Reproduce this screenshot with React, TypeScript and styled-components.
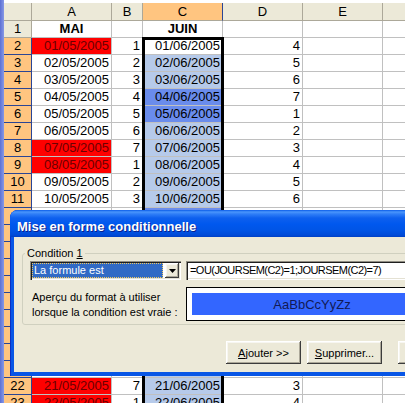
import styled, { createGlobalStyle } from 'styled-components';

const GlobalStyle = createGlobalStyle`
  body {
    margin: 0;
    background: #fff;
    font-family: "Liberation Sans", Arial, sans-serif;
  }
`;

const Page = styled.div`
  position: relative;
  width: 405px;
  height: 403px;
  overflow: hidden;
  display: flex;
  background: #fff;
`;

const WindowEdge = styled.div`
  flex: none;
  width: 4px;
  background: linear-gradient(90deg, #5d70d4, #8799e6);
`;

const Sheet = styled.div`
  flex: none;
  margin-top: 3px;
  display: grid;
  grid-template-columns: 28px 80px 31px 80px 80px 80px 80px;
  grid-template-rows: 18px;
  grid-auto-rows: 17px;
  font-size: 13px;
  color: #000;
`;

const HeaderCell = styled.div<{ $selected?: boolean }>`
  box-sizing: border-box;
  border-right: 1px solid ${p => (p.$selected ? '#2a4595' : '#aca899')};
  border-bottom: 1px solid ${p => (p.$selected ? '#2a4595' : '#aca899')};
  background: ${p => (p.$selected ? '#ffc580' : '#ece9d8')};
  text-align: center;
  line-height: 16px;
`;

const ColumnLetter = styled(HeaderCell)`
  line-height: 17px;
  border-bottom-color: #aca899;
`;

const Cell = styled.div<{ $bg?: string; $align?: string; $bold?: boolean; $ink?: string }>`
  box-sizing: border-box;
  border-right: 1px solid #c0c0c0;
  border-bottom: 1px solid #c0c0c0;
  background: ${p => p.$bg ?? '#fff'};
  color: ${p => p.$ink ?? '#000'};
  text-align: ${p => p.$align ?? 'right'};
  font-weight: ${p => (p.$bold ? 700 : 400)};
  padding: 0 2px;
  line-height: 16px;
  white-space: nowrap;
  overflow: hidden;
`;

const SelectionFrame = styled.div`
  position: absolute;
  left: 142px;
  top: 37px;
  width: 82px;
  height: 420px;
  box-sizing: border-box;
  border: 3px solid #000;
  pointer-events: none;
`;

/* dialog */

const Dialog = styled.div`
  position: absolute;
  left: 10px;
  top: 210px;
  width: 470px;
  height: 166px;
  display: flex;
  flex-direction: column;
  border-radius: 8px 8px 0 0;
  background: #0856e6;
  box-shadow: inset 1px 0 0 #0a2fc4;
  overflow: hidden;
`;

const TitleBar = styled.div`
  flex: none;
  box-sizing: border-box;
  height: 27px;
  padding: 6px 0 0 7px;
  display: flex;
  align-items: center;
  background: linear-gradient(
    180deg,
    #0a5ce8 0px,
    #4a96fc 2px,
    #2f7ef7 4px,
    #0e60ee 8px,
    #0058ee 14px,
    #0055e6 20px,
    #004bd8 25px,
    #0040c4 27px
  );
  color: #fff;
  font-size: 13px;
  font-weight: 700;
  text-shadow: 1px 1px 0 #0a1f8c;
`;

const DialogBody = styled.div`
  flex: 1;
  margin: 0 0 4px 4px;
  display: flex;
  flex-direction: column;
  background: #ece9d8;
  font-size: 11px;
  color: #000;
`;

const GroupBox = styled.fieldset`
  box-sizing: border-box;
  width: 440px;
  min-width: 0;
  margin: 10px 0 0 8px;
  padding: 0 0 3px 0;
  border: 1px solid #d0d0bf;
  border-radius: 3px;
`;

const GroupLegend = styled.legend`
  margin-left: 2px;
  padding: 0 2px;
  line-height: 13px;
  font-size: 11px;
`;

const GroupContent = styled.div`
  padding: 1px 0 0 7px;
  display: flex;
  flex-direction: column;
`;

const ConditionRow = styled.div`
  display: flex;
  gap: 5px;
  height: 19px;
`;

const sunken = `
  box-shadow:
    inset 1px 1px 0 #8f8d83,
    inset 2px 2px 0 #1e1e1e,
    inset -1px -1px 0 #ffffff,
    inset -2px -2px 0 #e4e1d3;
`;

const raised = `
  box-shadow:
    inset -1px -1px 0 #3c3c3c,
    inset 1px 1px 0 #ffffff,
    inset -2px -2px 0 #aca899,
    inset 2px 2px 0 #f7f6f1;
`;

const Combo = styled.div`
  box-sizing: border-box;
  flex: none;
  width: 151px;
  height: 19px;
  padding: 2px;
  display: flex;
  gap: 2px;
  background: #fff;
  ${sunken}
`;

const ComboValue = styled.div`
  flex: 1;
  box-sizing: border-box;
  border: 1px dotted #f0c860;
  background: #316ac5;
  color: #fff;
  padding-left: 1px;
  line-height: 13px;
  white-space: nowrap;
`;

const DropButton = styled.div`
  flex: none;
  width: 14px;
  display: flex;
  align-items: center;
  justify-content: center;
  background: #ece9d8;
  ${raised}
`;

const FormulaField = styled.div`
  box-sizing: border-box;
  flex: none;
  width: 260px;
  height: 19px;
  padding: 0 4px;
  background: #fff;
  line-height: 19px;
  letter-spacing: -0.55px;
  white-space: nowrap;
  ${sunken}
`;

const DetailRow = styled.div`
  display: flex;
  margin-top: 7px;
`;

const FormatLabel = styled.div`
  flex: none;
  width: 156px;
  box-sizing: border-box;
  padding: 3px 0 0 2px;
  line-height: 15px;
`;

const PreviewBox = styled.div`
  flex: none;
  box-sizing: border-box;
  width: 252px;
  height: 34px;
  padding: 5px;
  border: 1px solid #000;
  background: #fff;
`;

const PreviewSwatch = styled.div`
  height: 100%;
  display: flex;
  align-items: center;
  justify-content: center;
  background: #3366ff;
  color: #121a55;
  font-size: 13px;
`;

const ButtonRow = styled.div`
  display: flex;
  gap: 6px;
  margin-top: 16px;
  padding-left: 212px;
`;

const DialogButton = styled.div<{ $spaced?: boolean }>`
  flex: none;
  box-sizing: border-box;
  width: 75px;
  height: 23px;
  margin-left: ${p => (p.$spaced ? '10px' : '0')};
  display: flex;
  align-items: center;
  justify-content: center;
  background: #ece9d8;
  white-space: nowrap;
  ${raised}
`;

const pad = (n: number) => String(n).padStart(2, '0');
const fmt = (d: Date) => `${pad(d.getDate())}/${pad(d.getMonth() + 1)}/${d.getFullYear()}`;

const COLS = ['A', 'B', 'C', 'D', 'E', 'F'];
const ROWS = Array.from({ length: 22 }, (_, i) => i + 2);
// rows 12..21 sit behind the dialog, their values are not drawn
const hidden = (r: number) => r >= 12 && r <= 21;

const App = () => {
  return (
    <Page>
      <GlobalStyle />
      <WindowEdge />
      <Sheet>
        <HeaderCell />
        {COLS.map(c => (
          <ColumnLetter key={c} $selected={c === 'C'}>
            {c}
          </ColumnLetter>
        ))}

        <HeaderCell>1</HeaderCell>
        <Cell $align="center" $bold>MAI</Cell>
        <Cell />
        <Cell $align="center" $bold>JUIN</Cell>
        <Cell />
        <Cell />
        <Cell />

        {ROWS.map(r => {
          const may = new Date(2005, 4, r - 1);
          const june = new Date(2005, 5, r - 1);
          const mayDay = may.getDay() + 1;
          const juneDay = june.getDay() + 1;
          const mayWeekend = mayDay === 1 || mayDay === 7;
          const juneWeekend = juneDay === 1 || juneDay === 7;
          const juneBg = r === 2 ? '#fff' : juneWeekend ? '#6a8cec' : '#b6caea';
          const show = !hidden(r);
          return [
            <HeaderCell key={`h${r}`} $selected>{show && r}</HeaderCell>,
            <Cell key={`a${r}`} $bg={mayWeekend ? '#ff0000' : '#fff'} $ink={mayWeekend ? '#6b0000' : '#000'}>
              {show && fmt(may)}
            </Cell>,
            <Cell key={`b${r}`}>{show && mayDay}</Cell>,
            <Cell key={`c${r}`} $bg={juneBg}>{show && fmt(june)}</Cell>,
            <Cell key={`d${r}`}>{show && juneDay}</Cell>,
            <Cell key={`e${r}`} />,
            <Cell key={`f${r}`} />,
          ];
        })}
      </Sheet>
      <SelectionFrame />

      <Dialog>
        <TitleBar>Mise en forme conditionnelle</TitleBar>
        <DialogBody>
          <GroupBox>
            <GroupLegend>
              Condition <u>1</u>
            </GroupLegend>
            <GroupContent>
              <ConditionRow>
                <Combo>
                  <ComboValue>La formule est</ComboValue>
                  <DropButton>
                    <svg width="7" height="4" viewBox="0 0 7 4">
                      <path d="M0 0h7L3.5 4z" fill="#000" />
                    </svg>
                  </DropButton>
                </Combo>
                <FormulaField>=OU(JOURSEM(C2)=1;JOURSEM(C2)=7)</FormulaField>
              </ConditionRow>
              <DetailRow>
                <FormatLabel>
                  Aperçu du format à utiliser
                  <br />
                  lorsque la condition est vraie :
                </FormatLabel>
                <PreviewBox>
                  <PreviewSwatch>AaBbCcYyZz</PreviewSwatch>
                </PreviewBox>
              </DetailRow>
            </GroupContent>
          </GroupBox>
          <ButtonRow>
            <DialogButton>
              <u>A</u>jouter &gt;&gt;
            </DialogButton>
            <DialogButton>
              <u>S</u>upprimer...
            </DialogButton>
            <DialogButton $spaced>OK</DialogButton>
          </ButtonRow>
        </DialogBody>
      </Dialog>
    </Page>
  );
};

export default App;
